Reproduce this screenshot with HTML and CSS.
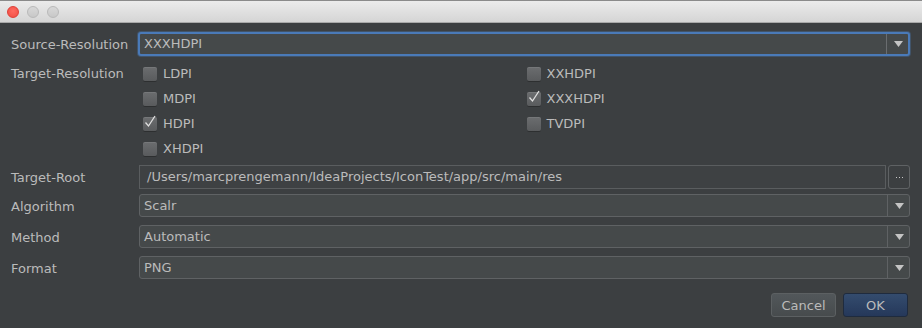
FILE: index.html
```html
<!DOCTYPE html>
<html>
<head>
<meta charset="utf-8">
<link rel="stylesheet" href="styles.css">
</head>
<body>
<div class="window">
  <div class="titlebar">
    <span class="light red"></span>
    <span class="light"></span>
    <span class="light"></span>
  </div>
  <div class="content">
    <div class="form">
      <div class="label l-source">Source-Resolution</div>
      <div class="combo focus">
        <span class="value">XXXHDPI</span>
        <span class="arrow"><svg width="9" height="6" viewBox="0 0 9 6"><path d="M0 0H9L4.5 6Z" fill="#c4c4c4"/></svg></span>
      </div>

      <div class="label l-target">Target-Resolution</div>
      <div class="checks">
        <label class="check"><span class="box"></span>LDPI</label>
        <label class="check"><span class="box"></span>MDPI</label>
        <label class="check"><span class="box on"><svg width="16" height="16" viewBox="0 0 16 16"><path d="M3.5 8.5L6.5 12L13 2" fill="none" stroke="#e0e0e0" stroke-width="1.3"/></svg></span>HDPI</label>
        <label class="check"><span class="box"></span>XHDPI</label>
        <label class="check"><span class="box"></span>XXHDPI</label>
        <label class="check"><span class="box on"><svg width="16" height="16" viewBox="0 0 16 16"><path d="M3.5 8.5L6.5 12L13 2" fill="none" stroke="#e0e0e0" stroke-width="1.3"/></svg></span>XXXHDPI</label>
        <label class="check"><span class="box"></span>TVDPI</label>
      </div>

      <div class="label l-root">Target-Root</div>
      <div class="pathrow">
        <div class="field">/Users/marcprengemann/IdeaProjects/IconTest/app/src/main/res</div>
        <div class="browse"><svg width="9" height="1" viewBox="0 0 9 1"><rect x="1" y="0" width="1" height="1" fill="#c8c8c8"/><rect x="4" y="0" width="1" height="1" fill="#c8c8c8"/><rect x="7" y="0" width="1" height="1" fill="#c8c8c8"/></svg></div>
      </div>

      <div class="label l-alg">Algorithm</div>
      <div class="combo c-alg">
        <span class="value">Scalr</span>
        <span class="arrow"><svg width="9" height="6" viewBox="0 0 9 6"><path d="M0 0H9L4.5 6Z" fill="#c4c4c4"/></svg></span>
      </div>

      <div class="label l-method">Method</div>
      <div class="combo c-method">
        <span class="value">Automatic</span>
        <span class="arrow"><svg width="9" height="6" viewBox="0 0 9 6"><path d="M0 0H9L4.5 6Z" fill="#c4c4c4"/></svg></span>
      </div>

      <div class="label l-format">Format</div>
      <div class="combo c-format">
        <span class="value">PNG</span>
        <span class="arrow"><svg width="9" height="6" viewBox="0 0 9 6"><path d="M0 0H9L4.5 6Z" fill="#c4c4c4"/></svg></span>
      </div>
    </div>
    <div class="buttons">
      <button class="btn cancel">Cancel</button>
      <button class="btn ok">OK</button>
    </div>
  </div>
</div>
</body>
</html>
```
FILE: styles.css
```css
* { box-sizing: border-box; }
html, body {
  margin: 0;
  padding: 0;
  width: 922px;
  height: 328px;
  overflow: hidden;
  background: #3c3f41;
  font-family: "DejaVu Sans", "Liberation Sans", sans-serif;
  font-size: 13px;
  color: #bbbbbb;
}
.window {
  width: 922px;
  height: 328px;
  display: flex;
  flex-direction: column;
}
.titlebar {
  height: 23px;
  flex: none;
  background: linear-gradient(#ebebeb, #d5d5d5);
  border-top: 1px solid #8a8a8a;
  border-bottom: 1px solid #a9a9a9;
  display: flex;
  align-items: center;
  padding-left: 7px;
  gap: 8px;
}
.light {
  width: 12px;
  height: 12px;
  border-radius: 50%;
  background: linear-gradient(#d8d8d8, #c8c8c8);
  border: 1px solid #b9b9b9;
}
.light.red {
  background: radial-gradient(circle at 50% 40%, #ff6a60, #f04c42);
  border-color: #de3f37;
}
.content {
  flex: 1;
  padding: 9px 12px 0 11px;
  display: flex;
  flex-direction: column;
}
.form {
  display: grid;
  grid-template-columns: 128px 1fr;
  align-items: start;
}
.label {
  line-height: 16px;
  white-space: nowrap;
}
.l-source { margin-top: 5px; }
.l-target { margin-top: 34px; }
.l-root { margin-top: 138px; }
.l-alg { margin-top: 167px; }
.l-method { margin-top: 198px; }
.l-format { margin-top: 229px; }
.label, .combo, .checks, .pathrow { grid-column: 1; grid-row: 1; }
.combo, .checks, .pathrow { grid-column: 2; }

.combo {
  height: 23px;
  display: flex;
  align-items: stretch;
  background: #45494a;
  border: 1px solid #5f6264;
  border-radius: 3px;
}
.combo .value {
  flex: 1;
  padding-left: 4px;
  line-height: 21px;
}
.combo .arrow {
  width: 22px;
  border-left: 1px solid #5f6264;
  display: flex;
  align-items: center;
  justify-content: center;
  padding-left: 1px;
}
.combo.focus {
  height: 24px;
  border: 2px solid #4a7ab8;
  box-shadow: 0 0 0 1px rgba(74,122,184,0.35);
  margin-left: -1px;
}
.combo.focus .value { line-height: 20px; padding-left: 4px; }
.combo.focus .arrow { border-left-color: #6a6d70; }
.c-alg { margin-top: 162px; }
.c-method { margin-top: 193px; }
.c-format { margin-top: 224px; }

.checks {
  margin-top: 34px;
  padding-left: 4px;
  display: grid;
  grid-template-columns: 1fr 1fr;
  grid-template-rows: repeat(4, 25px);
  grid-auto-flow: column;
}
.check {
  display: flex;
  align-items: center;
  gap: 6px;
  height: 16px;
  line-height: 16px;
}
.box {
  width: 14px;
  height: 14px;
  flex: none;
  border-radius: 2px;
  background: linear-gradient(#6b6d6f, #595b5d);
  box-shadow: inset 0 1px 0 rgba(255,255,255,0.08), 0 1px 0 rgba(0,0,0,0.25);
  position: relative;
}
.box svg {
  position: absolute;
  left: -1px;
  top: -3px;
}

.pathrow {
  margin-top: 133px;
  display: flex;
  gap: 2px;
  height: 24px;
}
.field {
  flex: 1;
  border: 1px solid #5a5d5f;
  background: #3e4143;
  padding-left: 7px;
  line-height: 22px;
  white-space: nowrap;
  overflow: hidden;
}
.browse {
  width: 22px;
  border: 1px solid #5f6264;
  border-radius: 3px;
  display: flex;
  align-items: center;
  justify-content: center;
  padding-top: 1px;
}

.buttons {
  margin-top: 14px;
  display: flex;
  justify-content: flex-end;
  gap: 7px;
  padding-right: 2px;
}
.btn {
  height: 24px;
  width: 65px;
  border-radius: 3px;
  font-family: "DejaVu Sans", "Liberation Sans", sans-serif;
  font-size: 13px;
  color: #bbbbbb;
  padding: 0;
}
.cancel {
  background: linear-gradient(#52575a, #474b4d);
  border: 1px solid #5c6062;
}
.ok {
  background: linear-gradient(#344c6e, #25385a);
  border: 1px solid #1f2b3e;
}
```
